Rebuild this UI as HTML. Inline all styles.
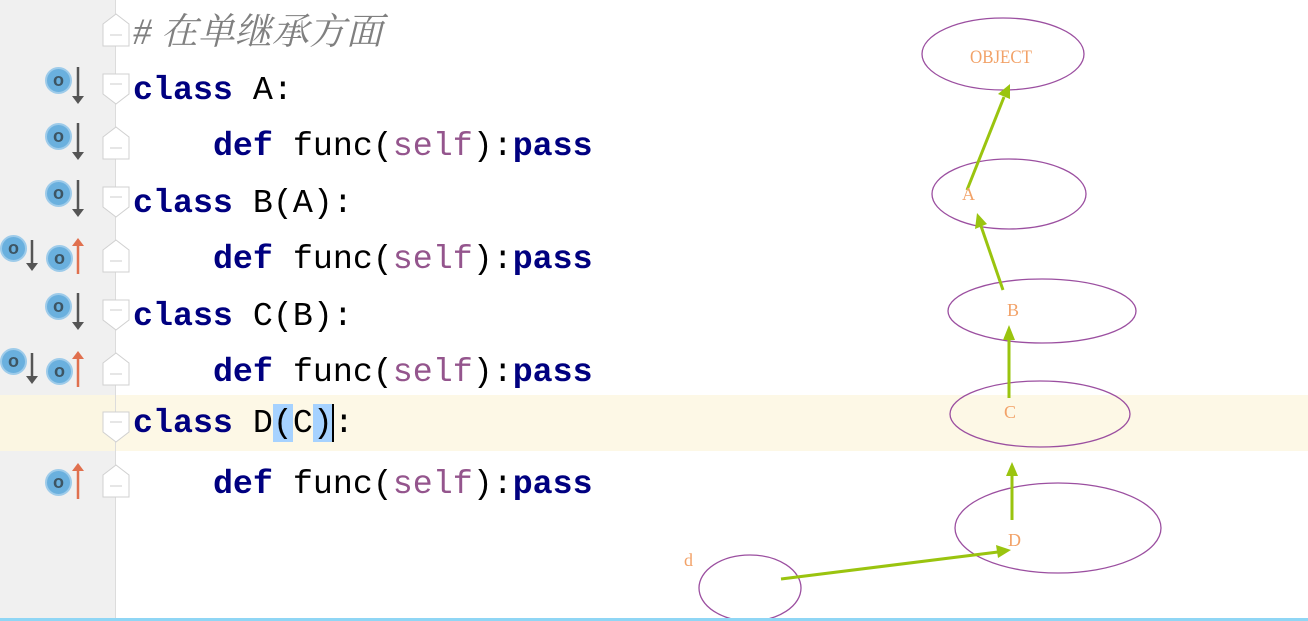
<!DOCTYPE html>
<html><head><meta charset="utf-8"><style>
*{margin:0;padding:0}
body{width:1308px;height:621px;overflow:hidden;background:#fff;position:relative;font-family:"Liberation Mono","Noto Sans CJK SC",monospace}
.gut{position:absolute;left:0;top:0;width:115px;height:621px;background:#f0f0f0;border-right:1px solid #dcdcdc}
.hl{position:absolute;left:0;top:395px;width:1308px;height:56px;background:#fdf8e6}
.ln{position:absolute;left:133px;height:56px;line-height:56px;font-size:33.3px;white-space:pre;color:#000}
.k{color:#000080;font-weight:bold}
.s{color:#94558d}
.c{color:#808080;font-style:italic;font-family:"Liberation Serif","Noto Serif CJK SC",serif;font-size:37px}
.sel{background:#a6d2ff}
.ico{position:absolute;width:27px;height:27px;border-radius:50%;background:#6ab0de;border:2px solid #9dcbea;box-sizing:border-box;font:bold 18px/22px "Liberation Sans",sans-serif;color:#3d5563;text-align:center}
.bot{position:absolute;left:0;top:618px;width:1308px;height:3px;background:#8fd6f5}
</style></head><body>
<div class="hl"></div>
<div class="gut"></div>
<div class="hl" style="left:0;width:115px;background:#fbf6e2"></div>

<div class="ln" style="top:5px"><span class="c"># 在单继承方面</span></div>
<div class="ln" style="top:62px"><span class="k">class</span> A:</div>
<div class="ln" style="top:118px">    <span class="k">def</span> func(<span class="s">self</span>):<span class="k">pass</span></div>
<div class="ln" style="top:175px"><span class="k">class</span> B(A):</div>
<div class="ln" style="top:231px">    <span class="k">def</span> func(<span class="s">self</span>):<span class="k">pass</span></div>
<div class="ln" style="top:288px"><span class="k">class</span> C(B):</div>
<div class="ln" style="top:344px">    <span class="k">def</span> func(<span class="s">self</span>):<span class="k">pass</span></div>
<div class="ln" style="top:395px"><span class="k">class</span> D<span class="sel">(</span>C<span class="sel">)</span><span style="border-left:2px solid #000;margin-left:-1px"></span>:</div>
<div class="ln" style="top:456px">    <span class="k">def</span> func(<span class="s">self</span>):<span class="k">pass</span></div>

<svg width="130" height="621" style="position:absolute;left:0;top:0">
<g fill="#fff" stroke="#d0d0d0" stroke-width="1">
<path d="M103 24 L116 14 L129 24 L129 46 L103 46Z"/>
<path d="M103 74 L129 74 L129 94 L116 104 L103 94Z"/>
<path d="M103 137 L116 127 L129 137 L129 159 L103 159Z"/>
<path d="M103 187 L129 187 L129 207 L116 217 L103 207Z"/>
<path d="M103 250 L116 240 L129 250 L129 272 L103 272Z"/>
<path d="M103 300 L129 300 L129 320 L116 330 L103 320Z"/>
<path d="M103 363 L116 353 L129 363 L129 385 L103 385Z"/>
<path d="M103 412 L129 412 L129 432 L116 442 L103 432Z"/>
<path d="M103 475 L116 465 L129 475 L129 497 L103 497Z"/>
</g>
<g stroke="#ccc" stroke-width="1">
<path d="M110 35h12M110 84h12M110 148h12M110 197h12M110 261h12M110 310h12M110 374h12M110 422h12M110 486h12"/>
</g>
<g stroke="#555" stroke-width="2.5" fill="#555">
<path d="M78 67v32"/><path d="M72 96l6 8 6-8z" stroke="none"/>
<path d="M78 123v32"/><path d="M72 152l6 8 6-8z" stroke="none"/>
<path d="M78 180v32"/><path d="M72 209l6 8 6-8z" stroke="none"/>
<path d="M78 293v32"/><path d="M72 322l6 8 6-8z" stroke="none"/>
<path d="M32 240v26"/><path d="M26 263l6 8 6-8z" stroke="none"/>
<path d="M32 353v26"/><path d="M26 376l6 8 6-8z" stroke="none"/>
</g>
<g stroke="#e0704e" stroke-width="2.5" fill="#e0704e">
<path d="M78 246v28"/><path d="M72 246l6-8 6 8z" stroke="none"/>
<path d="M78 359v28"/><path d="M72 359l6-8 6 8z" stroke="none"/>
<path d="M78 471v28"/><path d="M72 471l6-8 6 8z" stroke="none"/>
</g>
</svg>
<div class="ico" style="left:45px;top:67px">o</div>
<div class="ico" style="left:45px;top:123px">o</div>
<div class="ico" style="left:45px;top:180px">o</div>
<div class="ico" style="left:0px;top:235px">o</div>
<div class="ico" style="left:46px;top:245px">o</div>
<div class="ico" style="left:45px;top:293px">o</div>
<div class="ico" style="left:0px;top:348px">o</div>
<div class="ico" style="left:46px;top:358px">o</div>
<div class="ico" style="left:45px;top:469px">o</div>

<svg width="1308" height="621" style="position:absolute;left:0;top:0">
<g fill="none" stroke="#9b4fa0" stroke-width="1.3">
<ellipse cx="1003" cy="54" rx="81" ry="36"/>
<ellipse cx="1009" cy="194" rx="77" ry="35"/>
<ellipse cx="1042" cy="311" rx="94" ry="32"/>
<ellipse cx="1040" cy="414" rx="90" ry="33"/>
<ellipse cx="1058" cy="528" rx="103" ry="45"/>
<ellipse cx="750" cy="588" rx="51" ry="33"/>
</g>
<g stroke="#9ac40f" stroke-width="3" fill="#9ac40f">
<path d="M967 190 L1004 97"/><path d="M998 94 L1010 84 L1010 99Z" stroke="none"/>
<path d="M1003 290 L981 226"/><path d="M975 229 L977 213 L987 224Z" stroke="none"/>
<path d="M1009 398 L1009 338"/><path d="M1003 340 L1009 325 L1015 340Z" stroke="none"/>
<path d="M1012 520 L1012 474"/><path d="M1006 476 L1012 462 L1018 476Z" stroke="none"/>
<path d="M781 579 L998 552"/><path d="M996 545 L1011 550 L998 558Z" stroke="none"/>
</g>
<g fill="#f2a268" font-family="Liberation Serif,serif" font-size="18">
<text x="1001" y="63" text-anchor="middle" font-size="19" textLength="62" lengthAdjust="spacingAndGlyphs">OBJECT</text>
<text x="962" y="200">A</text>
<text x="1007" y="316">B</text>
<text x="1004" y="418">C</text>
<text x="1008" y="546">D</text>
<text x="684" y="566">d</text>
</g>
</svg>
<div class="bot"></div>
</body></html>
